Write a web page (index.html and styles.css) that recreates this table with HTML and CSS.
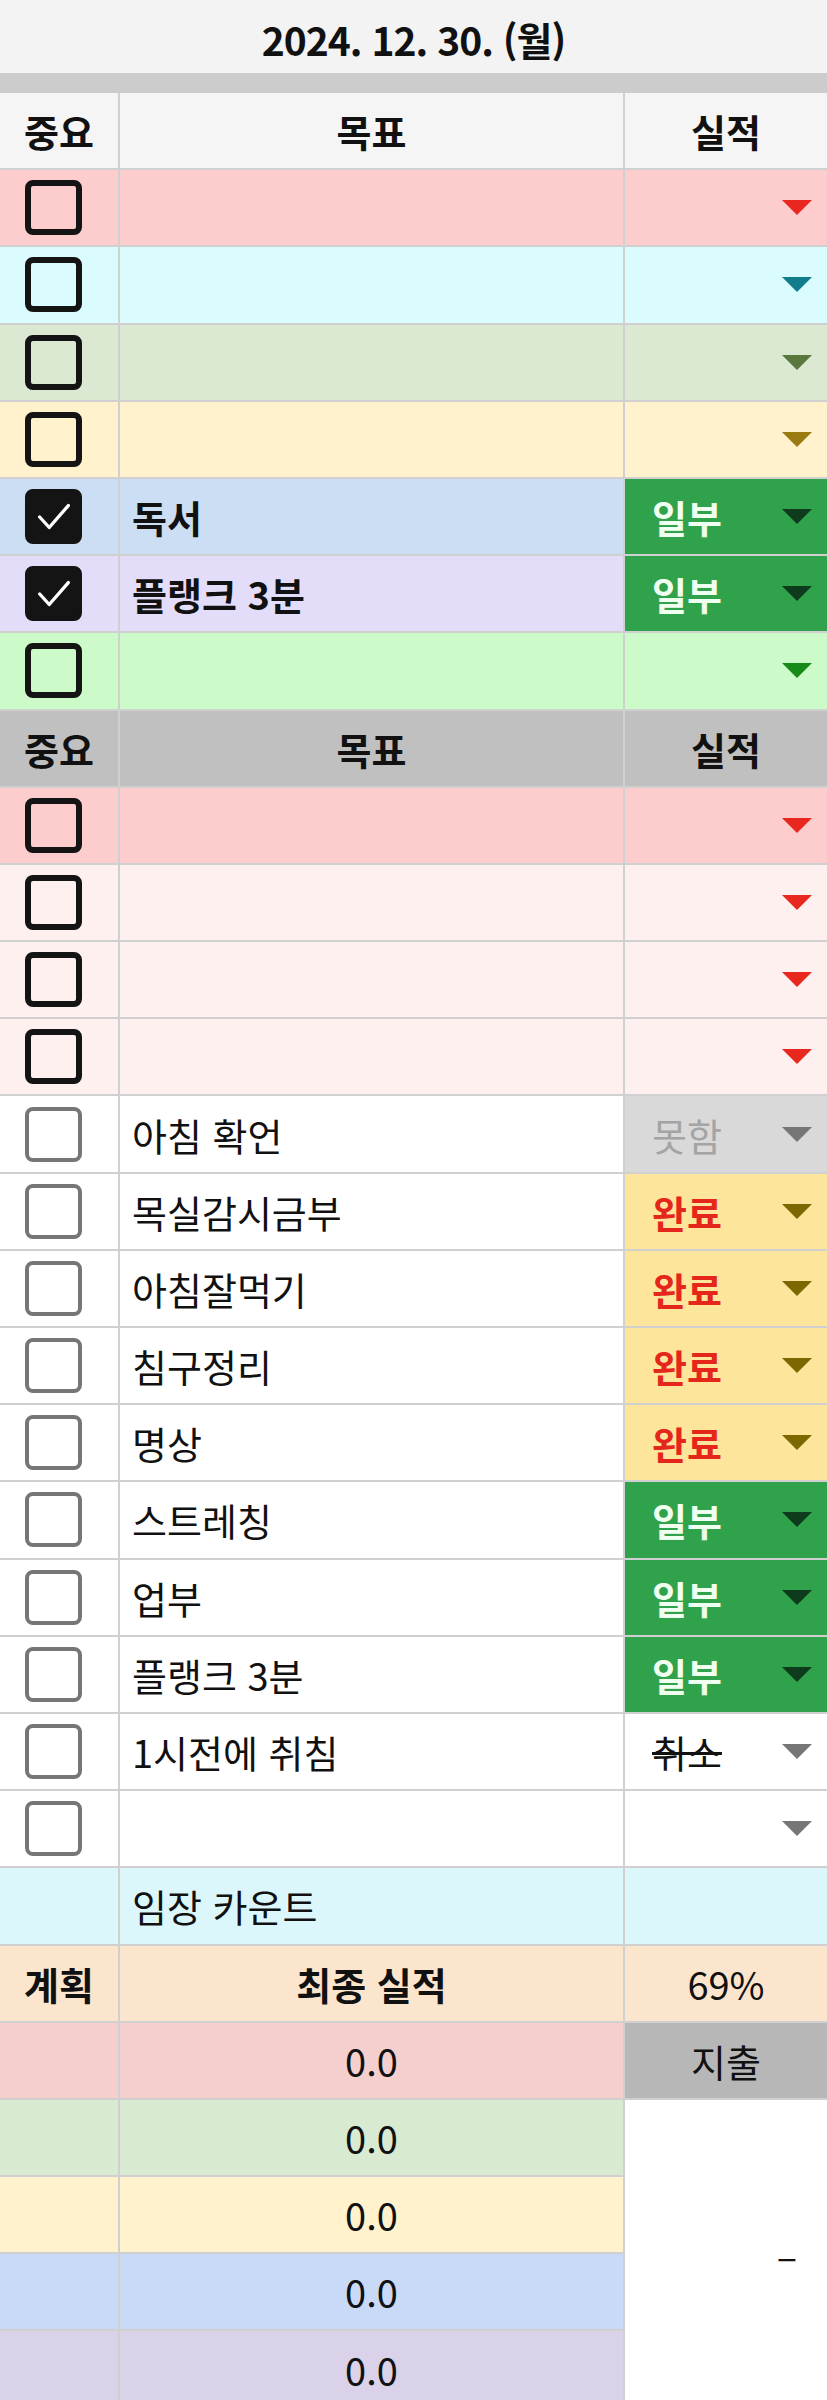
FILE: index.html
```html
<!DOCTYPE html>
<html lang="ko">
<head>
<meta charset="utf-8">
<title>2024. 12. 30.</title>
<link rel="stylesheet" href="styles.css">
</head>
<body>
<div class="page">
  <div class="title">2024. 12. 30. (월)</div>
  <div class="band"></div>

  <div class="row hd1">
    <div class="cell center bold">중요</div>
    <div class="cell center bold">목표</div>
    <div class="cell center bold">실적</div>
  </div>

  <div class="row bg-pink">
    <div class="cell c1"><span class="cb"></span></div>
    <div class="cell c2"></div>
    <div class="cell st"><span class="lbl"></span><span class="caret k-red"></span></div>
  </div>
  <div class="row bg-cyan">
    <div class="cell c1"><span class="cb"></span></div>
    <div class="cell c2"></div>
    <div class="cell st"><span class="lbl"></span><span class="caret k-teal"></span></div>
  </div>
  <div class="row bg-sage">
    <div class="cell c1"><span class="cb"></span></div>
    <div class="cell c2"></div>
    <div class="cell st"><span class="lbl"></span><span class="caret k-olive"></span></div>
  </div>
  <div class="row bg-yellow">
    <div class="cell c1"><span class="cb"></span></div>
    <div class="cell c2"></div>
    <div class="cell st"><span class="lbl"></span><span class="caret k-gold"></span></div>
  </div>
  <div class="row bg-blue">
    <div class="cell c1"><span class="cb on"><svg viewBox="0 0 44 44" width="44" height="42"><polyline points="7,22 17,33 37,10" fill="none" stroke="#fff" stroke-width="3.5" stroke-linecap="round" stroke-linejoin="round"/></svg></span></div>
    <div class="cell c2 bold">독서</div>
    <div class="cell st chip-green"><span class="lbl">일부</span><span class="caret k-dkgreen"></span></div>
  </div>
  <div class="row bg-purple">
    <div class="cell c1"><span class="cb on"><svg viewBox="0 0 44 44" width="44" height="42"><polyline points="7,22 17,33 37,10" fill="none" stroke="#fff" stroke-width="3.5" stroke-linecap="round" stroke-linejoin="round"/></svg></span></div>
    <div class="cell c2 bold">플랭크 3분</div>
    <div class="cell st chip-green"><span class="lbl">일부</span><span class="caret k-dkgreen"></span></div>
  </div>
  <div class="row bg-lgreen">
    <div class="cell c1"><span class="cb"></span></div>
    <div class="cell c2"></div>
    <div class="cell st"><span class="lbl"></span><span class="caret k-green"></span></div>
  </div>

  <div class="row hd2">
    <div class="cell center bold">중요</div>
    <div class="cell center bold">목표</div>
    <div class="cell center bold">실적</div>
  </div>

  <div class="row bg-pink">
    <div class="cell c1"><span class="cb"></span></div>
    <div class="cell c2"></div>
    <div class="cell st"><span class="lbl"></span><span class="caret k-red"></span></div>
  </div>
  <div class="row bg-blush">
    <div class="cell c1"><span class="cb"></span></div>
    <div class="cell c2"></div>
    <div class="cell st"><span class="lbl"></span><span class="caret k-red"></span></div>
  </div>
  <div class="row bg-blush">
    <div class="cell c1"><span class="cb"></span></div>
    <div class="cell c2"></div>
    <div class="cell st"><span class="lbl"></span><span class="caret k-red"></span></div>
  </div>
  <div class="row bg-blush">
    <div class="cell c1"><span class="cb"></span></div>
    <div class="cell c2"></div>
    <div class="cell st"><span class="lbl"></span><span class="caret k-red"></span></div>
  </div>

  <div class="row">
    <div class="cell c1"><span class="cb soft"></span></div>
    <div class="cell c2">아침 확언</div>
    <div class="cell st chip-gray"><span class="lbl">못함</span><span class="caret k-gray"></span></div>
  </div>
  <div class="row">
    <div class="cell c1"><span class="cb soft"></span></div>
    <div class="cell c2">목실감시금부</div>
    <div class="cell st chip-yellow"><span class="lbl">완료</span><span class="caret k-brown"></span></div>
  </div>
  <div class="row">
    <div class="cell c1"><span class="cb soft"></span></div>
    <div class="cell c2">아침잘먹기</div>
    <div class="cell st chip-yellow"><span class="lbl">완료</span><span class="caret k-brown"></span></div>
  </div>
  <div class="row">
    <div class="cell c1"><span class="cb soft"></span></div>
    <div class="cell c2">침구정리</div>
    <div class="cell st chip-yellow"><span class="lbl">완료</span><span class="caret k-brown"></span></div>
  </div>
  <div class="row">
    <div class="cell c1"><span class="cb soft"></span></div>
    <div class="cell c2">명상</div>
    <div class="cell st chip-yellow"><span class="lbl">완료</span><span class="caret k-brown"></span></div>
  </div>
  <div class="row">
    <div class="cell c1"><span class="cb soft"></span></div>
    <div class="cell c2">스트레칭</div>
    <div class="cell st chip-green"><span class="lbl">일부</span><span class="caret k-dkgreen"></span></div>
  </div>
  <div class="row">
    <div class="cell c1"><span class="cb soft"></span></div>
    <div class="cell c2">업부</div>
    <div class="cell st chip-green"><span class="lbl">일부</span><span class="caret k-dkgreen"></span></div>
  </div>
  <div class="row">
    <div class="cell c1"><span class="cb soft"></span></div>
    <div class="cell c2">플랭크 3분</div>
    <div class="cell st chip-green"><span class="lbl">일부</span><span class="caret k-dkgreen"></span></div>
  </div>
  <div class="row">
    <div class="cell c1"><span class="cb soft"></span></div>
    <div class="cell c2">1시전에 취침</div>
    <div class="cell st"><span class="lbl strike">취소</span><span class="caret k-gray"></span></div>
  </div>
  <div class="row">
    <div class="cell c1"><span class="cb soft"></span></div>
    <div class="cell c2"></div>
    <div class="cell st"><span class="lbl"></span><span class="caret k-gray"></span></div>
  </div>

  <div class="row bg-ice">
    <div class="cell"></div>
    <div class="cell c2">임장 카운트</div>
    <div class="cell"></div>
  </div>
  <div class="row bg-peach">
    <div class="cell center bold">계획</div>
    <div class="cell center bold">최종 실적</div>
    <div class="cell center">69%</div>
  </div>

  <div class="summary">
    <div class="cell s-pink"></div>
    <div class="cell center s-pink">0.0</div>
    <div class="cell center s-gray">지출</div>

    <div class="cell s-green"></div>
    <div class="cell center s-green">0.0</div>
    <div class="cell merged">–</div>

    <div class="cell s-yellow"></div>
    <div class="cell center s-yellow">0.0</div>

    <div class="cell s-blue"></div>
    <div class="cell center s-blue">0.0</div>

    <div class="cell s-purple"></div>
    <div class="cell center s-purple">0.0</div>
  </div>
</div>
</body>
</html>
```

FILE: styles.css
```css
* {
  box-sizing: border-box;
  margin: 0;
  padding: 0;
}

body {
  margin: 0;
  background: #ffffff;
  font-family: "Noto Sans CJK KR", "Noto Sans", sans-serif;
  color: #111111;
}

.page {
  width: 827px;
}

.title {
  height: 73px;
  background: #f3f3f3;
  display: flex;
  align-items: center;
  justify-content: center;
  font-size: 39px;
  font-weight: 700;
  letter-spacing: -1px;
  padding-top: 4px;
}

.band {
  height: 20px;
  background: #cccccc;
}

.row {
  display: grid;
  grid-template-columns: 120px 505px 202px;
  height: 77.2px;
  border-bottom: 2px solid #d0d0d0;
  font-size: 38px;
}

.cell {
  display: flex;
  align-items: center;
  min-width: 0;
  border-right: 2px solid #d0d0d0;
  white-space: nowrap;
}

.row > .cell:last-child {
  border-right: 0;
}

.center {
  justify-content: center;
}

.bold {
  font-weight: 700;
}

.c1 {
  padding-left: 25px;
}

.c2 {
  padding-left: 12px;
}

/* header rows */
.hd1 {
  background: #f5f5f5;
}

.hd2 {
  background: #c0c0c0;
}

/* row colours */
.bg-pink { background: #fdcccc; }
.bg-cyan { background: #dafcff; }
.bg-sage { background: #dbe9d2; }
.bg-yellow { background: #fff2cc; }
.bg-blue { background: #cbdef3; }
.bg-purple { background: #e3ddfa; }
.bg-lgreen { background: #ccfac8; }
.bg-blush { background: #fff0f0; }
.bg-ice { background: #dcf7fc; }
.bg-peach { background: #fce5cd; }

/* checkboxes */
.cb {
  display: flex;
  align-items: center;
  justify-content: center;
  width: 57px;
  height: 55px;
  border: 6px solid #141414;
  border-radius: 8px;
}

.cb.on {
  background: #141414;
}

.cb.soft {
  border: 4px solid #767676;
  background: #ffffff;
}

/* status cell */
.st {
  justify-content: space-between;
  padding: 0 15px 0 27px;
}

.lbl {
  font-weight: 700;
}

.chip-green {
  background: #31a24c;
  color: #effff0;
}

.chip-yellow {
  background: #fde59c;
  color: #e4261b;
}

.chip-gray {
  background: #d9d9d9;
  color: #a4a4a4;
}

.chip-gray .lbl {
  font-weight: 400;
}

.lbl.strike {
  font-weight: 400;
  text-decoration: line-through;
  text-decoration-thickness: 3px;
}

/* dropdown caret */
.caret {
  width: 0;
  height: 0;
  border-left: 15px solid transparent;
  border-right: 15px solid transparent;
  border-top: 15px solid #777777;
}

.k-red { border-top-color: #e8281e; }
.k-teal { border-top-color: #137c8b; }
.k-olive { border-top-color: #5a773d; }
.k-gold { border-top-color: #9c7a12; }
.k-green { border-top-color: #168a16; }
.k-dkgreen { border-top-color: #0d3b1c; }
.k-brown { border-top-color: #7d6700; }
.k-gray { border-top-color: #767676; }

/* bottom summary block */
.summary {
  display: grid;
  grid-template-columns: 120px 505px 202px;
  grid-auto-rows: 77.2px;
  font-size: 38px;
}

.summary > .cell {
  border-bottom: 2px solid #d0d0d0;
}

.s-pink { background: #f5cece; }
.s-green { background: #d9ead3; }
.s-yellow { background: #fff2cc; }
.s-blue { background: #c9daf8; }
.s-purple { background: #d9d2e9; }

.summary > .s-gray {
  background: #b7b7b7;
  border-right: 0;
}

.summary > .merged {
  grid-row: span 4;
  background: #ffffff;
  justify-content: flex-end;
  padding-right: 30px;
  border-right: 0;
  border-bottom: 0;
}
```
